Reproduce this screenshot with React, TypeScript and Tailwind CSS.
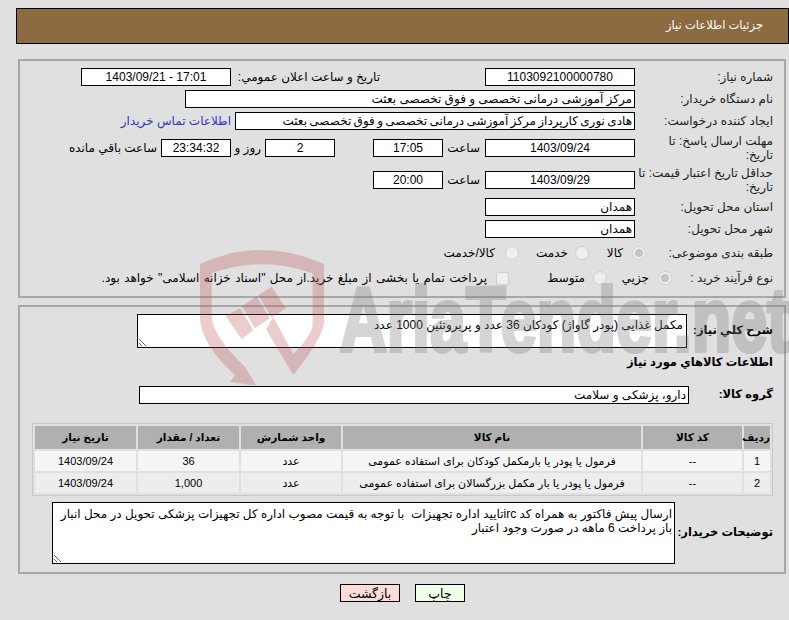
import React from 'react'

const font = 'font-["Liberation_Sans","DejaVu_Sans",sans-serif]'

const Box = ({ value, className = '', dir }: { value: string; className?: string; dir?: string }) => (
    <input readOnly dir={dir} value={value} className={`h-[18px] shrink-0 border border-black bg-white px-[2px] text-[12px] text-black outline-none ${className}`} />
)

const Label = ({ children }: { children: React.ReactNode }) => (
    <label className="w-[138px] shrink-0 whitespace-nowrap leading-[14px] text-[#222]">{children}</label>
)

const Row = ({ top, children }: { top: string; children: React.ReactNode }) => (
    <div className={`flex h-[18px] items-center ${top}`}>{children}</div>
)

const Radio = ({ checked = false }: { checked?: boolean }) => (
    <span className="flex h-[14px] w-[14px] shrink-0 items-center justify-center rounded-full border border-[#d0d0d0] bg-[#eeeeee]">
        {checked && <span className="h-[8px] w-[8px] rounded-full bg-[#c4c4c4]" />}
    </span>
)

const Watermark = () => (
    <div className="pointer-events-none absolute left-0 top-0 h-[385px] w-[789px] overflow-hidden">
        <svg className="absolute left-[190px] top-[240px]" width="160" height="145" viewBox="0 0 480 435">
            <path
                fill="rgba(185,75,80,0.28)"
                d="M30 72 Q215 -12 402 72 L402 250 Q395 300 310 405 L228 268 L250 232 L310 342 Q370 280 368 250 L368 100 Q215 45 65 100 L65 230 Q70 290 165 380 L200 438 L120 425 L135 405 Q30 310 30 230 Z"
            />
            <path fill="rgba(185,75,80,0.28)" d="M107 228 L150 205 L190 270 L155 298 Z" />
            <path fill="rgba(185,75,80,0.28)" d="M155 198 L200 170 L240 235 L195 265 Z" />
            <path fill="rgba(185,75,80,0.28)" d="M205 165 L245 140 L288 205 L245 233 Z" />
        </svg>
        <span dir="ltr" className="absolute left-[340px] top-[272px] origin-left scale-x-[0.72] whitespace-nowrap font-['Liberation_Sans',sans-serif] text-[90px] font-bold leading-[96px] text-[#787878] opacity-30 [-webkit-text-stroke:4px_#787878]">
            AriaTender.net
        </span>
    </div>
)

const App = () => {
    return (
        <div dir="rtl" className={`relative h-[620px] w-[789px] overflow-hidden bg-[#e0e0e0] text-[12px] text-black ${font}`}>
            <div className="ml-[16px] mt-[8px] flex h-[36px] items-center border border-black bg-[#8b6b3f] pr-[25px] text-[11.5px] text-white">
                جزئیات اطلاعات نیاز
            </div>

            <fieldset className="mx-[3px] ml-[18px] mt-[15px] h-[239px] border-2 border-[#a8a8a8] pr-[11px] pt-[7px]">
                <Row top="">
                    <Label>شماره نیاز:</Label>
                    <Box value="1103092100000780" className="w-[150px] text-center" />
                    <span className="mr-[105px] w-[149px] shrink-0">تاریخ و ساعت اعلان عمومي:</span>
                    <Box dir="ltr" value="1403/09/21 - 17:01" className="w-[150px] text-center" />
                </Row>
                <Row top="mt-[4px]">
                    <Label>نام دستگاه خریدار:</Label>
                    <Box value="مرکز آموزشی درمانی تخصصی و فوق تخصصی بعثت" className="w-[450px]" />
                </Row>
                <Row top="mt-[4px]">
                    <Label>ایجاد کننده درخواست:</Label>
                    <Box value="هادی نوری کارپرداز مرکز آموزشی درمانی تخصصی و فوق تخصصی بعثت" className="w-[400px] [word-spacing:-1px]" />
                    <a className="mr-[4px] text-[#3333cc]">اطلاعات تماس خریدار</a>
                </Row>
                <Row top="mt-[9px]">
                    <Label>مهلت ارسال پاسخ: تا<br />تاریخ:</Label>
                    <Box value="1403/09/24" className="w-[150px] text-center" />
                    <span className="w-[42px] shrink-0 pr-[5px]">ساعت</span>
                    <Box value="17:05" className="w-[70px] text-center" />
                    <span className="w-[38px] shrink-0" />
                    <Box value="2" className="w-[70px] text-center" />
                    <span className="w-[34px] shrink-0 pr-[4px]">روز و</span>
                    <Box value="23:34:32" className="w-[70px] bg-[#ffffee] text-center" />
                    <span className="mr-[4px] whitespace-nowrap">ساعت باقي مانده</span>
                </Row>
                <Row top="mt-[14px]">
                    <Label>حداقل تاریخ اعتبار قیمت: تا<br />تاریخ:</Label>
                    <Box value="1403/09/29" className="w-[150px] text-center" />
                    <span className="w-[42px] shrink-0 pr-[5px]">ساعت</span>
                    <Box value="20:00" className="w-[70px] text-center" />
                </Row>
                <Row top="mt-[9px]">
                    <Label>استان محل تحویل:</Label>
                    <Box value="همدان" className="w-[150px]" />
                </Row>
                <Row top="mt-[4px]">
                    <Label>شهر محل تحویل:</Label>
                    <Box value="همدان" className="w-[150px]" />
                </Row>
                <Row top="mt-[6px]">
                    <label className="w-[127px] shrink-0 whitespace-nowrap text-[#222]">طبقه بندی موضوعی:</label>
                    <Radio checked />
                    <span className="w-[43px] shrink-0 pr-[9px]">کالا</span>
                    <Radio />
                    <span className="w-[56px] shrink-0 pr-[7px]">خدمت</span>
                    <Radio />
                    <span className="mr-[10px]">کالا/خدمت</span>
                </Row>
                <Row top="mt-[7px]">
                    <label className="w-[101px] shrink-0 whitespace-nowrap text-[#222]">نوع فرآیند خرید :</label>
                    <Radio checked />
                    <span className="w-[51px] shrink-0 pr-[9px]">جزیي</span>
                    <Radio />
                    <span className="w-[84px] shrink-0 pr-[8px]">متوسط</span>
                    <span className="h-[13px] w-[13px] shrink-0 rounded-[2px] border border-[#cfcfcf] bg-[#eeeeee]" />
                    <span className="mr-[9px] whitespace-nowrap [word-spacing:1px]">پرداخت تمام یا بخشی از مبلغ خرید.از محل "اسناد خزانه اسلامی" خواهد بود.</span>
                </Row>
            </fieldset>

            <fieldset className="ml-[18px] mr-[3px] mt-[7px] h-[269px] border-2 border-[#a8a8a8] pr-[11px] pt-[7px]">
                <div className="flex h-[34px] items-center">
                    <label className="w-[86px] shrink-0 whitespace-nowrap text-[11.5px] font-bold">شرح کلي نیاز:</label>
                    <textarea readOnly defaultValue="مکمل غذایی (پودر گاواژ) کودکان 36 عدد و پریروتئین 1000 عدد" className="h-[34px] w-[550px] shrink-0 border border-black bg-white px-[3px] pt-[3px] text-[12px] leading-[14px] outline-none" />
                </div>
                <div className="mt-[6px] h-[16px] whitespace-nowrap text-[11.5px] font-bold leading-[16px]">اطلاعات کالاهاي مورد نیاز</div>
                <div className="mt-[16px] flex h-[18px] items-center">
                    <label className="w-[84px] shrink-0 whitespace-nowrap text-[11.5px] font-bold">گروه کالا:</label>
                    <Box value="دارو، پزشکی و سلامت" className="w-[550px]" />
                </div>
                <table className="mt-[19px] w-[741px] table-fixed border-separate border-spacing-[2px] border border-[#c8c8c8] text-center text-[11px]">
                    <colgroup>
                        <col className="w-[26px]" />
                        <col className="w-[99px]" />
                        <col className="w-[298px]" />
                        <col className="w-[100px]" />
                        <col className="w-[101px]" />
                        <col className="w-[101px]" />
                    </colgroup>
                    <thead>
                        <tr className="h-[23px] bg-[#b0b0b0] text-[10.5px]">
                            <th className="p-0 font-bold">ردیف</th>
                            <th className="p-0 font-bold">کد کالا</th>
                            <th className="p-0 font-bold">نام کالا</th>
                            <th className="p-0 font-bold">واحد شمارش</th>
                            <th className="p-0 font-bold">تعداد / مقدار</th>
                            <th className="p-0 font-bold">تاریخ نیاز</th>
                        </tr>
                    </thead>
                    <tbody>
                        <tr className="h-[20px] bg-[#f5f5f5]">
                            <td className="p-0">1</td>
                            <td className="p-0">--</td>
                            <td className="p-0">فرمول یا پودر یا بارمکمل کودکان برای استفاده عمومی</td>
                            <td className="p-0">عدد</td>
                            <td className="p-0">36</td>
                            <td className="p-0">1403/09/24</td>
                        </tr>
                        <tr className="h-[20px] bg-[#ededed]">
                            <td className="p-0">2</td>
                            <td className="p-0">--</td>
                            <td className="p-0">فرمول یا پودر یا بار مکمل بزرگسالان برای استفاده عمومی</td>
                            <td className="p-0">عدد</td>
                            <td className="p-0">1,000</td>
                            <td className="p-0">1403/09/24</td>
                        </tr>
                    </tbody>
                </table>
                <div className="mt-[6px] flex h-[62px] items-center">
                    <label className="w-[98px] shrink-0 whitespace-nowrap text-[11.5px] font-bold">توضیحات خریدار:</label>
                    <textarea readOnly defaultValue={"ارسال پیش فاکتور به همراه کد ircتایید اداره تجهیزات  با توجه به قیمت مصوب اداره کل تجهیزات پزشکی تحویل در محل انبار\nباز پرداخت 6 ماهه در صورت وجود اعتبار"} className="h-[62px] w-[623px] shrink-0 border border-black bg-white px-[2px] pt-[4px] text-[12px] leading-[14px] outline-none" />
                </div>
            </fieldset>

            <div className="mt-[10px] flex justify-center gap-[15px] pl-[16px]">
                <button className="h-[18px] w-[50px] border border-black bg-[#efffe8] text-[12.5px]">چاپ</button>
                <button className="h-[18px] w-[60px] border border-black bg-[#ffdcdc] text-[12.5px]">بازگشت</button>
            </div>

            <Watermark />
        </div>
    )
}

export default App
